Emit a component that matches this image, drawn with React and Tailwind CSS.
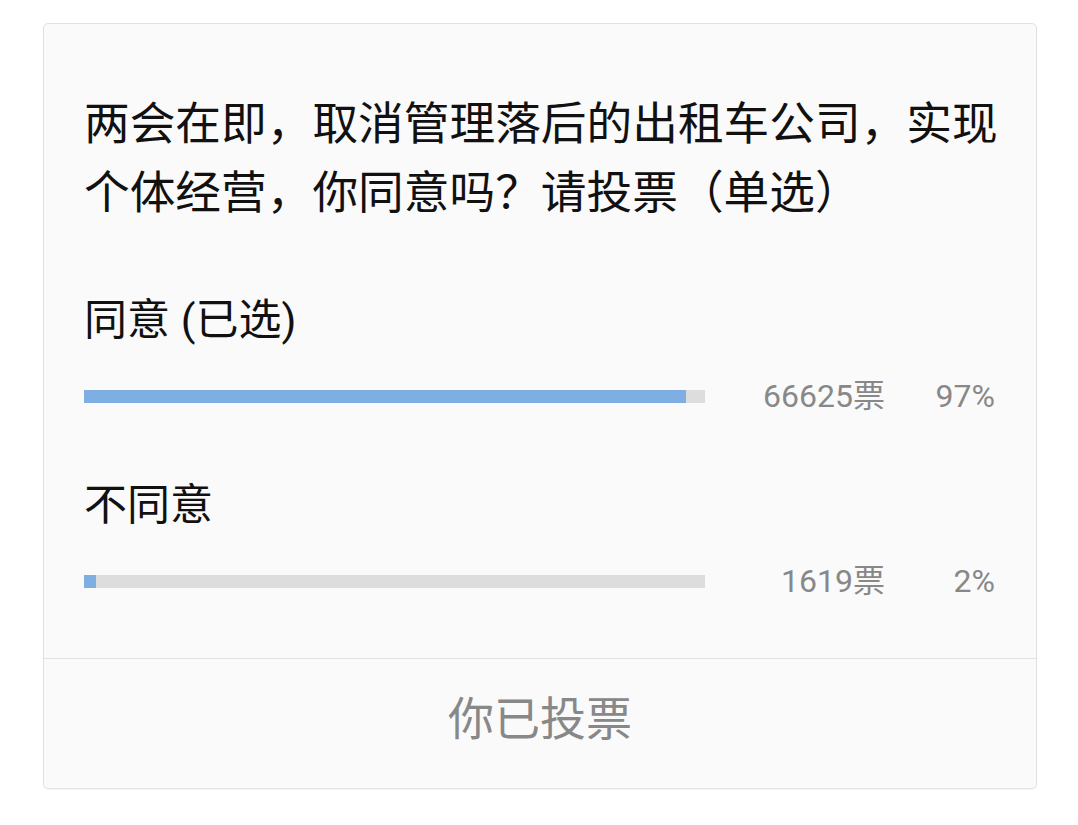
import React from "react";

const font = { fontFamily: 'Roboto, "Noto Sans CJK SC", sans-serif' };

function Option({ label, votes, pct, width }) {
  return (
    <div className="flex flex-col">
      <div className="text-[43px] leading-[50px] text-[#111]">{label}</div>
      <div className="flex items-center h-[40px] mt-[31px]">
        <div className="w-[621px] h-[13px] bg-[#dddddd] flex">
          <div className="h-full bg-[#7faee3]" style={{ width: width + "px" }} />
        </div>
        <div className="w-[180px] text-right text-[32px] leading-[40px] text-[#888]">{votes}</div>
        <div className="w-[110px] text-right text-[32px] leading-[40px] text-[#888]">{pct}</div>
      </div>
    </div>
  );
}

export default function App() {
  return (
    <div className="w-[1078px] h-[825px] bg-white pt-[23px] pl-[43px]" style={font}>
      <div className="w-[994px] h-[766px] border border-[#e2e2e2] rounded-[5px] bg-[#fafafa] flex flex-col shadow-[0_1px_1px_rgba(0,0,0,0.04)]">
        <div className="pt-[62px] px-[40px] flex flex-col flex-1">
          <div className="text-[45.7px] leading-[69px] text-[#111] -mr-[14px]" style={{ fontFamily: '"Noto Sans CJK SC", sans-serif' }}>
            两会在即，取消管理落后的出租车公司，实现个体经营，你同意吗？请投票（单选）
          </div>
          <div className="mt-[71px]">
            <Option label="同意 (已选)" votes="66625票" pct="97%" width={602} />
          </div>
          <div className="mt-[64px]">
            <Option label="不同意" votes="1619票" pct="2%" width={12} />
          </div>
        </div>
        <div className="h-[130px] border-t border-[#e2e2e2] flex items-center justify-center pb-[8px]">
          <span className="text-[46px] text-[#888]">你已投票</span>
        </div>
      </div>
    </div>
  );
}
